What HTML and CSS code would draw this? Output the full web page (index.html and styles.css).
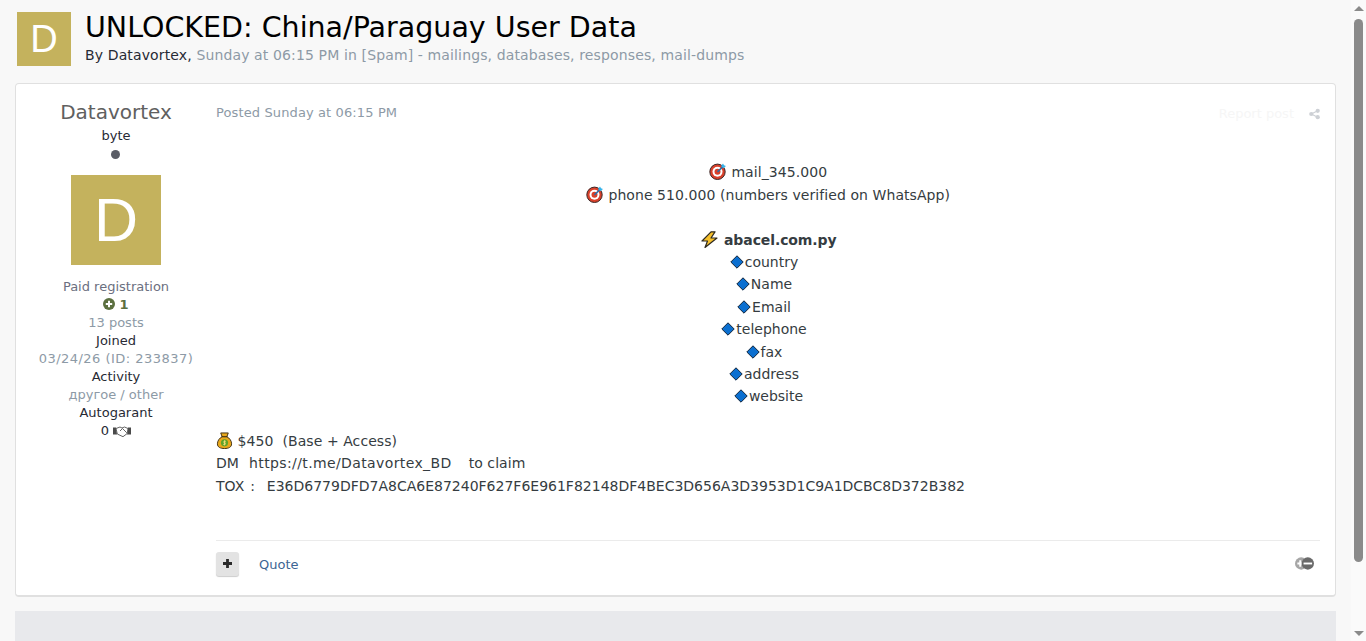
FILE: index.html
```html
<!DOCTYPE html>
<html lang="en">
<head>
    <meta charset="UTF-8">
    <meta name="viewport" content="width=device-width, initial-scale=1.0">
    <title>UNLOCKED: China/Paraguay User Data</title>
    <link rel="stylesheet" href="styles.css">
</head>
<body>
    <svg class="defs" width="0" height="0">
        <defs>
            <symbol id="target" viewBox="0 0 17 17">
                <circle cx="8.500" cy="8.800" r="7.700" fill="#d8402a" stroke="#3a2a2a" stroke-width="1"/>
                <circle cx="8.500" cy="8.800" r="5" fill="#fff"/>
                <circle cx="8.500" cy="8.800" r="3" fill="#d8402a"/>
                <path d="M8.500 8.800L14 3.500" stroke="#2b6fa8" stroke-width="1.600"/>
                <path d="M12 3l2-2.500 1 1.800 2 .6-2.500 2.300z" fill="#35b3ea"/>
            </symbol>
            <symbol id="diamond" viewBox="0 0 14 14">
                <path d="M7 .8L13.200 7 7 13.200 .8 7z" fill="#0b6fd0" stroke="#12263c" stroke-width="1"/>
            </symbol>
            <symbol id="bolt" viewBox="0 0 17 17">
                <path d="M10 .8L1 10h5.500L4 16.500 16 7h-6L14 .8z" fill="#f6c02c" stroke="#2e2a20" stroke-width="1.200" stroke-linejoin="round"/>
            </symbol>
            <symbol id="bag" viewBox="0 0 16 18">
                <path d="M4 1h8L10.500 5c3 1.500 5 4.500 5 7.500 0 3.500-3 5-7.500 5s-7.500-1.500-7.500-5C.5 9.500 2.500 6.500 5.500 5z" fill="#e9a91c" stroke="#3c2c12" stroke-width="1"/>
                <path d="M5 5h6" stroke="#3c2c12" stroke-width="1.200"/>
                <circle cx="8" cy="11.500" r="3.800" fill="#5fa32c"/>
                <path d="M9.500 9.800H7.400v1.600h1.400v1.700H6.600M8 8.800v5.400" stroke="#f6e27a" stroke-width=".9" fill="none"/>
            </symbol>
        </defs>
    </svg>

    <main class="page">
        <header class="topic-header">
            <div class="avatar avatar-small">D</div>
            <div class="topic-title">
                <h1>UNLOCKED: China/Paraguay User Data</h1>
                <p class="topic-meta"><span class="dark">By Datavortex,</span> Sunday at 06:15 PM in [Spam] - mailings, databases, responses, mail-dumps</p>
            </div>
        </header>

        <article class="post">
            <aside class="author">
                <h3 class="author-name">Datavortex</h3>
                <div class="dark">byte</div>
                <div class="dot"></div>
                <div class="avatar avatar-large">D</div>
                <div class="group">Paid registration</div>
                <div class="reputation">
                    <svg class="rep-icon" viewBox="0 0 12 12"><circle cx="6" cy="6" r="6" fill="#5c7040"/><path d="M6 2.800v6.400M2.800 6h6.400" stroke="#fff" stroke-width="2"/></svg>
                    <b>1</b>
                </div>
                <div class="muted">13 posts</div>
                <div class="dark">Joined</div>
                <div class="muted joined-date">03/24/26 (ID: 233837)</div>
                <div class="dark">Activity</div>
                <div class="muted">другое / other</div>
                <div class="dark">Autogarant</div>
                <div class="dark garant">0
                    <svg class="shake" viewBox="0 0 18 12"><path d="M0 2h3l1 7H0zM18 2h-3l-1 7h4z" fill="#4a4a4a"/><path d="M3 3L7 1.500l2 1 2.500-1L15 3l-.8 5-4.200 3.200-5.700-2.700zM7 5.500L9.500 3l4.300 4.300" fill="#fff" stroke="#555" stroke-width=".9"/></svg>
                </div>
            </aside>

            <div class="post-body">
                <div class="post-top">
                    <span class="posted">Posted Sunday at 06:15 PM</span>
                    <span class="post-tools">
                        <span class="report">Report post</span>
                        <svg class="share" viewBox="0 0 12 12"><circle cx="2.500" cy="6" r="2.300" fill="#cdd0d5"/><circle cx="9.500" cy="2.500" r="2.300" fill="#cdd0d5"/><circle cx="9.500" cy="9.500" r="2.300" fill="#cdd0d5"/><path d="M2.500 6l7-3.500M2.500 6l7 3.500" stroke="#cdd0d5" stroke-width="1.300"/></svg>
                    </span>
                </div>

                <div class="post-content">
                    <p class="center"><svg class="emoji"><use href="#target"/></svg> mail_345.000</p>
                    <p class="center"><svg class="emoji"><use href="#target"/></svg> phone 510.000 (numbers verified on WhatsApp)</p>
                    <p class="center">&nbsp;</p>
                    <p class="center bolt-line"><svg class="emoji"><use href="#bolt"/></svg> <b class="domain">abacel.com.py</b></p>
                    <p class="center item"><svg class="diamond"><use href="#diamond"/></svg>country</p>
                    <p class="center item"><svg class="diamond"><use href="#diamond"/></svg>Name</p>
                    <p class="center item"><svg class="diamond"><use href="#diamond"/></svg>Email</p>
                    <p class="center item"><svg class="diamond"><use href="#diamond"/></svg>telephone</p>
                    <p class="center item"><svg class="diamond"><use href="#diamond"/></svg>fax</p>
                    <p class="center item"><svg class="diamond"><use href="#diamond"/></svg>address</p>
                    <p class="center item-last"><svg class="diamond"><use href="#diamond"/></svg>website</p>
                    <p>&nbsp;</p>
                    <p><svg class="emoji bag"><use href="#bag"/></svg> $450&nbsp; (Base + Access)</p>
                    <p class="dm">DM&nbsp; <span class="link">https://t.me/Datavortex_BD</span>&nbsp; &nbsp; to claim</p>
                    <p class="tox">TOX :&nbsp; E36D6779DFD7A8CA6E87240F627F6E961F82148DF4BEC3D656A3D3953D1C9A1DCBC8D372B382</p>
                </div>

                <div class="post-controls">
                    <button class="plus"><svg viewBox="0 0 9 9"><path d="M4.500 0v9M0 4.500h9" stroke="#2a2a2a" stroke-width="2.800"/></svg></button>
                    <a class="quote" href="#">Quote</a>
                    <span class="ignore">
                        <svg viewBox="0 0 20 13"><circle cx="6.500" cy="6.500" r="6.500" fill="#a6a6a6"/><path d="M5.500 3v7M2.500 6.500h6" stroke="#fff" stroke-width="2"/><circle cx="13.500" cy="6.500" r="6.500" fill="#6a6a6a"/><path d="M9 6.500h9" stroke="#fff" stroke-width="2"/></svg>
                    </span>
                </div>
            </div>
        </article>

        <div class="next-block"></div>
    </main>

    <div class="scrollbar">
        <span class="arrow arrow-up"></span>
        <div class="track"><div class="thumb"></div></div>
        <span class="arrow arrow-down"></span>
    </div>
</body>
</html>
```

FILE: styles.css
```css
html, body {
    height: 100%;
}
body {
    margin: 0;
    display: flex;
    height: 641px;
    overflow: hidden;
    background-color: #f8f8f8;
    font-family: "DejaVu Sans", Verdana, sans-serif;
    font-size: 13px;
    line-height: 18px;
    color: #353c41;
}
.defs {
    position: absolute;
}
.page {
    flex: 1;
    min-width: 0;
    padding: 12px 15px 0 15px;
}
.topic-header {
    display: flex;
    align-items: flex-start;
    margin-left: 2px;
    height: 71px;
}
.avatar {
    display: flex;
    align-items: center;
    justify-content: center;
    background-color: #c4b25d;
    color: #fff;
    font-family: "Liberation Sans", Arial, sans-serif;
    flex-shrink: 0;
}
.avatar-small {
    width: 54px;
    height: 54px;
    font-size: 38px;
}
.avatar-large {
    width: 90px;
    height: 90px;
    font-size: 61px;
    margin: 16px auto 13px;
}
.topic-title {
    margin-left: 14px;
}
h1 {
    margin: 0;
    font-size: 28.5px;
    font-weight: 400;
    line-height: 32px;
    color: #000;
}
.topic-meta {
    margin: 1px 0 0;
    font-size: 14px;
    line-height: 20px;
    letter-spacing: .13px;
    color: #8d9aa6;
}
.dark {
    color: #272a34;
}
.muted {
    color: #8d9aa6;
}
.joined-date {
    letter-spacing: .48px;
}
.post {
    display: flex;
    height: 511px;
    background-color: #fff;
    border: 1px solid #e0e0e0;
    border-bottom-width: 2px;
    border-radius: 4px;
}
.author {
    width: 200px;
    flex-shrink: 0;
    text-align: center;
    padding-top: 15px;
    box-sizing: border-box;
}
.author-name {
    margin: 0 0 2px;
    font-size: 20px;
    font-weight: 400;
    line-height: 26px;
    color: #606060;
}
.dot {
    width: 9px;
    height: 9px;
    margin: 5px 0 0 95px;
    border-radius: 50%;
    background-color: #5a5d66;
}
.group {
    color: #6b6f80;
}
.reputation {
    color: #5c7040;
}
.rep-icon {
    width: 12px;
    height: 12px;
    vertical-align: -1px;
}
.shake {
    width: 18px;
    height: 13px;
    vertical-align: -3px;
}
.post-body {
    flex: 1;
    min-width: 0;
    padding: 20px 15px 0 0;
    display: flex;
    flex-direction: column;
}
.post-top {
    display: flex;
    justify-content: space-between;
    align-items: center;
    height: 18px;
}
.posted {
    letter-spacing: .12px;
    color: #8d9aa6;
}
.post-tools {
    display: flex;
    align-items: center;
    gap: 15px;
}
.report {
    padding-top: 1px;
    color: #f6f6f6;
}
.share {
    width: 11px;
    height: 12px;
    margin-top: 2px;
}
.post-content {
    margin-top: 39.4px;
    font-size: 14px;
    line-height: 22.4px;
    letter-spacing: .07px;
    color: #353c41;
    height: 378.6px;
}
.post-content p {
    margin: 0;
}
.center {
    text-align: center;
}
.item {
    padding-right: 8px;
    letter-spacing: 0;
}
.item-last {
    padding-left: 1px;
    letter-spacing: 0;
}
.bolt-line {
    padding-left: 2px;
}
.domain {
    letter-spacing: -.1px;
}
.dm {
    position: relative;
    top: -.2px;
}
.link {
    margin: 0 -1px 0 1px;
    letter-spacing: .38px;
}
.tox {
    word-spacing: 1.5px;
    letter-spacing: 0;
}
.emoji {
    width: 17px;
    height: 17px;
    margin-right: 1px;
    vertical-align: -3px;
}
.bag {
    margin-right: 0;
}
.diamond {
    width: 14px;
    height: 14px;
    margin-right: 1px;
    vertical-align: -2px;
}
.post-controls {
    display: flex;
    align-items: center;
    border-top: 1px solid #ebebeb;
    padding-top: 11px;
}
.plus {
    display: flex;
    align-items: center;
    justify-content: center;
    width: 23px;
    height: 24px;
    padding: 0;
    border: 0;
    border-radius: 3px;
    background-color: #e3e3e3;
    box-shadow: 0 1px 1px #ccc;
}
.plus svg {
    width: 9px;
    height: 9px;
}
.quote {
    margin-left: 20px;
    padding-top: 2px;
    color: #3d6594;
    text-decoration: none;
}
.ignore {
    margin-left: auto;
    margin-right: 6px;
    display: flex;
}
.ignore svg {
    width: 19px;
    height: 13px;
}
.next-block {
    height: 60px;
    margin-top: 14px;
    background-color: #e8e9ec;
}
.scrollbar {
    width: 15px;
    flex-shrink: 0;
    display: flex;
    flex-direction: column;
    align-items: center;
    background-color: #fafafa;
}
.track {
    flex: 1;
    width: 100%;
    padding: 3px 2px 1px 3px;
    box-sizing: border-box;
    min-height: 0;
}
.thumb {
    height: 543px;
    width: 9px;
    background-color: #8a8a8a;
    border-radius: 5px;
}
.arrow {
    width: 0;
    height: 0;
    margin: 6px 0 5px;
    border-left: 5px solid transparent;
    border-right: 5px solid transparent;
}
.arrow-up {
    border-bottom: 5px solid #8a8a8a;
}
.arrow-down {
    border-top: 5px solid #8a8a8a;
}
```
